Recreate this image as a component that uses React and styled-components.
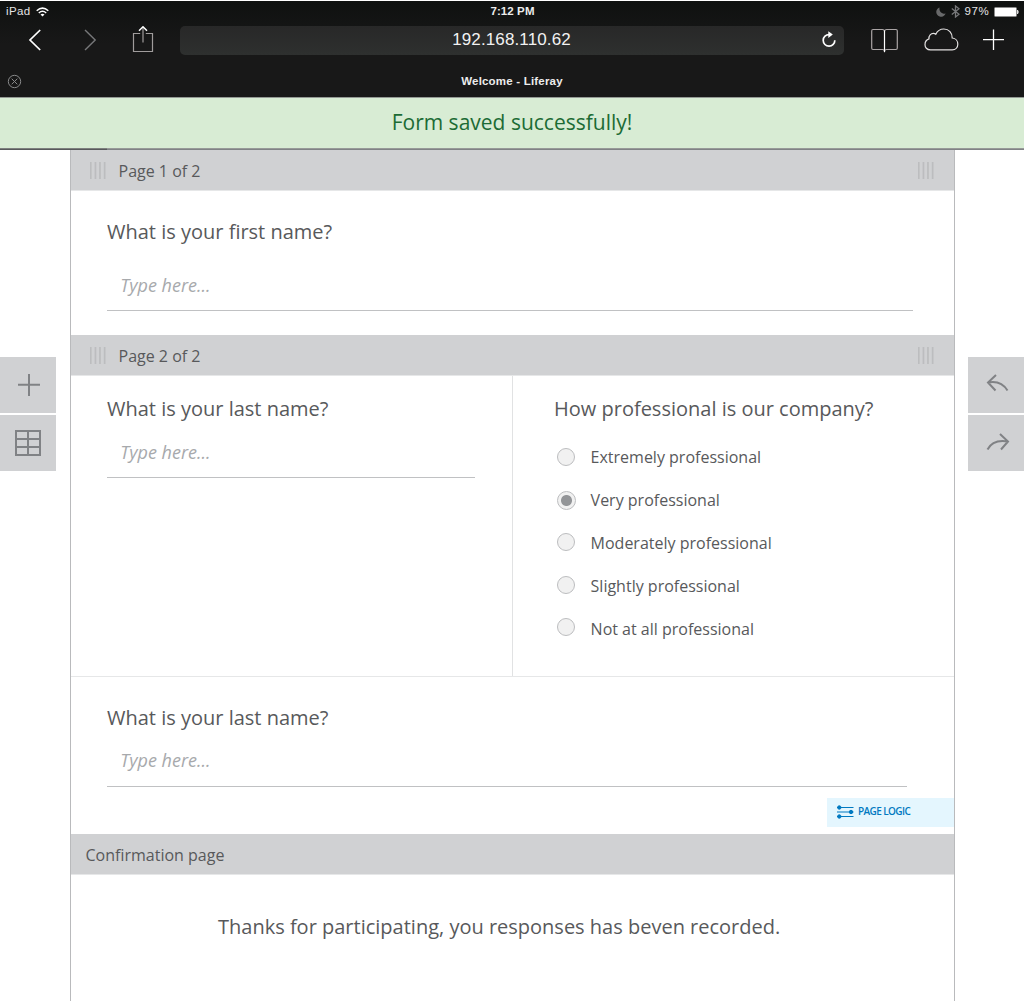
import React from "react";
import styled, { createGlobalStyle } from "styled-components";

const GlobalStyle = createGlobalStyle`
  * { box-sizing: border-box; }
  body { margin: 0; background: #fff; overflow: hidden; }
`;

const Screen = styled.div`
  width: 1024px;
  height: 1001px;
  overflow: hidden;
  display: flex;
  flex-direction: column;
  background: #fff;
  font-family: "Open Sans", "Noto Sans", sans-serif;
  color: #58595b;
`;

/* ---------- Browser chrome ---------- */
const Chrome = styled.header`
  flex: none;
  height: 97px;
  border-top: 1px solid #fff;
  background: linear-gradient(#0f1110, #181818 45%, #181818);
  color: #fff;
  font-family: "Liberation Sans", Arial, sans-serif;
`;

const StatusBar = styled.div`
  height: 21px;
  display: grid;
  grid-template-columns: 1fr auto 1fr;
  align-items: center;
  padding: 0 5px 0 6px;
  font-size: 11.5px;
  line-height: 21px;
`;

const StatusGroup = styled.div`
  display: flex;
  align-items: center;
  justify-content: ${(p) => (p.$end ? "flex-end" : "flex-start")};
  gap: ${(p) => p.$gap}px;
  color: #e4e4e4;
  letter-spacing: ${(p) => p.$spacing || 0}px;
`;

const Clock = styled.span`
  font-weight: 700;
  font-size: 11.5px;
  letter-spacing: 0.1px;
  color: #ececec;
`;

const Toolbar = styled.div`
  height: 36px;
  display: flex;
  align-items: center;
`;

const ToolIcon = styled.svg`
  flex: none;
  display: block;
  margin-left: ${(p) => p.$gap || 0}px;
  fill: none;
  stroke: ${(p) => p.$color || "#fff"};
  stroke-width: ${(p) => p.$weight || 1};
`;

const AddressBar = styled.div`
  width: 664px;
  height: 29px;
  margin-left: 26px;
  border-radius: 5px;
  background: linear-gradient(#282828, #2e302f);
  display: grid;
  grid-template-columns: 1fr auto 1fr;
  align-items: center;
  padding-right: 7px;
  padding-left: 6px;
  font-size: 17px;
  color: #f2f2f2;
`;

const Address = styled.span`
  grid-column: 2;
  letter-spacing: 0.13px;
`;

const Reload = styled.svg`
  justify-self: end;
  display: block;
`;

const TabRow = styled.div`
  height: 39px;
  display: grid;
  grid-template-columns: 1fr auto 1fr;
  align-items: center;
  padding: 8px 7px 0;
`;

const TabTitle = styled.span`
  padding-bottom: 2px;
  font-size: 11.5px;
  font-weight: 700;
  letter-spacing: 0.2px;
  color: #ececec;
`;

/* ---------- Notification ---------- */
const Banner = styled.div`
  flex: none;
  height: 51px;
  border-top: 1px solid #939994;
  background: #d8ecd4;
  color: #1c6b35;
  text-align: center;
  font-size: 21px;
  line-height: 48px;
`;

const LoadTrack = styled.div`
  flex: none;
  height: 2px;
  background: linear-gradient(#979a98 50%, #808285 50%);
`;

const LoadProgress = styled.div`
  width: 107px;
  height: 2px;
  background: linear-gradient(#7d807e 50%, #58595b 50%);
`;

/* ---------- Workspace ---------- */
const Workspace = styled.main`
  flex: 1;
  display: grid;
  grid-template-columns: 70px 885px 69px;
`;

const ToolRail = styled.aside`
  display: flex;
  flex-direction: column;
  align-items: ${(p) => (p.$end ? "flex-end" : "flex-start")};
  gap: 2px;
  padding-top: ${(p) => p.$top}px;
`;

const ToolButton = styled.button`
  width: 56px;
  height: 56px;
  padding: 0;
  border: 0;
  background: #d0d1d3;
  display: block;
`;

const Form = styled.section`
  border: 1px solid #b9babc;
  border-top: 0;
  border-bottom: 0;
`;

const PageHeader = styled.div`
  height: 41px;
  display: flex;
  align-items: center;
  gap: 12.5px;
  padding: 0 20px 0 ${(p) => p.$left}px;
  background: #d0d1d3;
  border-bottom: 1px solid #e6e7e8;
  font-size: 16px;
  line-height: 40px;
`;

const HeaderTitle = styled.span`
  flex: 1;
  padding-top: 2px;
`;

const GripIcon = styled.svg`
  flex: none;
  display: block;
  fill: #bcbdbf;
`;

const Field = styled.div`
  height: ${(p) => p.$height}px;
  padding: ${(p) => p.$top}px 0 0 36px;
`;

const Question = styled.div`
  font-size: 20px;
  line-height: 28px;
  white-space: nowrap;
`;

const Answer = styled.div`
  width: ${(p) => p.$width}px;
  margin-top: ${(p) => p.$gap}px;
  padding: 0 0 ${(p) => p.$bottom || 13}px 13.25px;
  border-bottom: 1px solid #c0c1c3;
  font-size: 18px;
  line-height: 24px;
  font-style: italic;
  color: #a7a9ac;
`;

const SplitRow = styled.div`
  height: 301px;
  display: grid;
  grid-template-columns: 442px 441px;
  border-bottom: 1px solid #e6e7e8;
`;

const Cell = styled.div`
  padding: 19px 0 0 ${(p) => p.$left}px;
  border-left: ${(p) => (p.$divided ? "1px solid #e1e2e3" : "0")};
  margin-left: ${(p) => (p.$divided ? "-1px" : "0")};
`;

const Options = styled.div`
  margin-top: 13px;
  padding-left: 3px;
`;

const Option = styled.label`
  height: 43px;
  display: flex;
  align-items: center;
  gap: ${(p) => (p.$checked ? 14.6 : 15.2)}px;
  padding-left: ${(p) => (p.$checked ? 0 : 0.4)}px;
  font-size: 16px;
  line-height: 43px;
`;

const Radio = styled.span`
  width: ${(p) => (p.$checked ? 19 : 18)}px;
  height: ${(p) => (p.$checked ? 19 : 18)}px;
  margin-top: ${(p) => p.$shift}px;
  border: 1px solid #bcbdbf;
  border-radius: 50%;
  background: ${(p) =>
    p.$checked ? "radial-gradient(circle, #939598 5px, #f1f1f1 6px)" : "#f1f1f1"};
`;

const LastField = styled.div`
  height: 157px;
  padding-top: 27px;
  display: flex;
  flex-direction: column;
`;

const FieldBody = styled.div`
  padding-left: 36px;
  height: 83px;
`;

const PageLogic = styled.div`
  align-self: flex-end;
  width: 127px;
  height: 29px;
  margin-top: 11px;
  padding: 0 0 1px 9px;
  display: flex;
  align-items: center;
  gap: 4px;
  background: #e4f6fe;
  color: #0079c1;
`;

const PageLogicLabel = styled.span`
  padding-bottom: 2px;
  font-size: 10px;
  font-weight: 600;
  letter-spacing: -0.6px;
`;

const Confirmation = styled.div`
  padding: 38px 0 0 147px;
`;

const options = [
  { label: "Extremely professional", shift: -2 },
  { label: "Very professional", shift: -1, checked: true },
  { label: "Moderately professional", shift: -3 },
  { label: "Slightly professional", shift: -3 },
  { label: "Not at all professional", shift: -5 },
];

function Grip() {
  return (
    <GripIcon width="16" height="17" viewBox="0 0 16 17">
      <path d="M0 0H1.6V17H0ZM4.6 0H6.3V17H4.6ZM9.1 0H10.8V17H9.1ZM13.8 0H15.5V17H13.8Z" />
    </GripIcon>
  );
}

function BrowserChrome() {
  return (
    <Chrome>
      <StatusBar>
        <StatusGroup $gap={5.5} $spacing={0.35}>
          iPad
          <svg width="13" height="10" viewBox="0 0 13 10" fill="none" stroke="#fff" strokeWidth="1.5">
            <path d="M.7 3.8Q6.5-1.6 12.3 3.8M2.8 6Q6.5 2.6 10.2 6" />
            <path d="M4.5 7.5Q6.5 5.8 8.5 7.5L6.5 9.6Z" fill="#fff" stroke="none" />
          </svg>
        </StatusGroup>
        <Clock>7:12 PM</Clock>
        <StatusGroup $end $gap={4.7} $spacing={0.6}>
          <svg width="10" height="10" viewBox="0 0 10 10">
            <path d="M3.6.4A4.8 4.8 0 1 0 9.6 6.6A5 5 0 0 1 3.6.4Z" fill="#68696a" />
          </svg>
          <svg width="9" height="13" viewBox="0 0 9 13" fill="none" stroke="#77787a" strokeWidth="1.3">
            <path d="M.8 3.5L8 9.2L4.5 12V1L8 3.8L.8 9.5" />
          </svg>
          97%
          <svg width="25" height="10" viewBox="0 0 25 10">
            <rect x=".5" y=".5" width="22" height="9" rx="1" fill="#fff" stroke="#8b8b8b" />
            <path d="M23.5 3Q25 5 23.5 7Z" fill="#ddd" stroke="#ddd" />
          </svg>
        </StatusGroup>
      </StatusBar>
      <Toolbar>
        <ToolIcon $gap={28} $weight={1.7} width="14" height="24" viewBox="0 0 14 24">
          <path d="M12.2 2L2 12L12.2 22" />
        </ToolIcon>
        <ToolIcon $gap={42} $weight={1.4} $color="#77787a" width="14" height="24" viewBox="0 0 14 24">
          <path d="M1 2L11.2 12L1 22" />
        </ToolIcon>
        <ToolIcon $gap={34} $color="#a09c9c" $weight={1.2} width="22" height="28" viewBox="0 0 22 28">
          <path d="M8.2 7.5H1.5V25.5H20.5V7.5H13.8M11 2V16.5" />
          <path d="M7 4.8L11 .8L15 4.8" stroke="#fff" strokeWidth="1.5" />
        </ToolIcon>
        <AddressBar>
          <Address>192.168.110.62</Address>
          <Reload width="16" height="18" viewBox="0 0 16 18" fill="none" stroke="#fff" strokeWidth="1.7">
            <path d="M8.2 3.6A5.8 5.8 0 1 0 13.8 9.2" />
            <path d="M7.3 .3L11.8 3.6L7.3 6.9Z" fill="#fff" stroke="none" />
          </Reload>
        </AddressBar>
        <ToolIcon $gap={27} $color="#aaa5a5" $weight={1.2} width="27" height="26" viewBox="0 0 27 26">
          <path d="M13.5 4Q13 2.5 11.5 2.5H2Q.7 2.5 .7 4V21Q.7 22.5 2 22.5H11.5Q13 22.5 13.5 24Q14 22.5 15.5 22.5H25Q26.3 22.5 26.3 21V4Q26.3 2.5 25 2.5H15.5Q14 2.5 13.5 4" />
          <path d="M13.5 3.5V25" stroke="#fff" />
        </ToolIcon>
        <ToolIcon $gap={26} $color="#e2e0e0" $weight={1.2} width="35" height="24" viewBox="0 0 35 24">
          <path d="M6.5 21.9C2.8 21.9 1 19.2 1 16.7C1 13.8 2.8 11.6 5 10.9C4.6 7.6 7 5.4 9.4 5.4Q10.8 5.4 11.8 6.2C13.5 2.6 16.4 1 19.8 1C25 1 28.3 5.1 28.2 10C31.8 10.3 33.8 13.2 33.8 16.2C33.8 19.2 31.8 21.9 28.2 21.9Z" />
        </ToolIcon>
        <ToolIcon $gap={23} $weight={1.3} width="23" height="24" viewBox="0 0 23 24">
          <path d="M11.5 1.5V22M1 11.7H22" />
        </ToolIcon>
      </Toolbar>
      <TabRow>
        <svg width="15" height="15" viewBox="0 0 15 15" fill="none" stroke="#88898a">
          <circle cx="7.5" cy="7.5" r="6.2" />
          <path d="M4.7 4.7L10.3 10.3M10.3 4.7L4.7 10.3" />
        </svg>
        <TabTitle>Welcome - Liferay</TabTitle>
      </TabRow>
    </Chrome>
  );
}

function PageBar({ title }) {
  return (
    <PageHeader $left={19}>
      <Grip />
      <HeaderTitle>{title}</HeaderTitle>
      <Grip />
    </PageHeader>
  );
}

export default function App() {
  return (
    <>
      <GlobalStyle />
      <Screen>
        <BrowserChrome />
        <Banner>Form saved successfully!</Banner>
        <LoadTrack>
          <LoadProgress />
        </LoadTrack>
        <Workspace>
          <ToolRail $top={207}>
            <ToolButton aria-label="Add">
              <svg width="56" height="56" fill="none" stroke="#808285" strokeWidth="2">
                <path d="M29 17V39M18 27.7H40" />
              </svg>
            </ToolButton>
            <ToolButton aria-label="Table">
              <svg width="56" height="56" fill="none" stroke="#808285" strokeWidth="2">
                <path d="M16 16H40V40H16ZM28 16V40M16 24H40M16 32H40" />
              </svg>
            </ToolButton>
          </ToolRail>
          <Form>
            <PageBar title="Page 1 of 2" />
            <Field $height={144} $top={27}>
              <Question>What is your first name?</Question>
              <Answer $width={806} $gap={27}>Type here...</Answer>
            </Field>
            <PageBar title="Page 2 of 2" />
            <SplitRow>
              <Cell $left={36}>
                <Question>What is your last name?</Question>
                <Answer $width={368} $gap={17}>Type here...</Answer>
              </Cell>
              <Cell $left={41} $divided>
                <Question>How professional is our company?</Question>
                <Options>
                  {options.map((o) => (
                    <Option key={o.label} $checked={o.checked}>
                      <Radio $checked={o.checked} $shift={o.shift} />
                      {o.label}
                    </Option>
                  ))}
                </Options>
              </Cell>
            </SplitRow>
            <LastField>
              <FieldBody>
                <Question>What is your last name?</Question>
                <Answer $width={800} $gap={16} $bottom={14}>Type here...</Answer>
              </FieldBody>
              <PageLogic>
                <svg width="18" height="14" viewBox="0 0 18 14" fill="#0079c1" stroke="#0079c1">
                  <path d="M1 2.5H17.5M1 7H17.5M1 11.5H17.5" />
                  <circle cx="3.3" cy="2.5" r="1.7" />
                  <circle cx="15" cy="7" r="1.7" />
                  <circle cx="3.3" cy="11.5" r="1.7" />
                </svg>
                <PageLogicLabel>PAGE LOGIC</PageLogicLabel>
              </PageLogic>
            </LastField>
            <PageHeader $left={14.5}>
              <HeaderTitle>Confirmation page</HeaderTitle>
            </PageHeader>
            <Confirmation>
              <Question>Thanks for participating, you responses has beven recorded.</Question>
            </Confirmation>
          </Form>
          <ToolRail $end $top={207}>
            <ToolButton aria-label="Undo">
              <svg width="56" height="56" fill="none" stroke="#808285" strokeWidth="2">
                <path d="M28 18L20 25.5L27.5 33.5M20 25.5Q33 23 39.5 33.5" />
              </svg>
            </ToolButton>
            <ToolButton aria-label="Redo">
              <svg width="56" height="56" fill="none" stroke="#808285" strokeWidth="2">
                <path d="M32 19L40 26.5L33 34.5M40 26.5Q25 24 19.5 34.5" />
              </svg>
            </ToolButton>
          </ToolRail>
        </Workspace>
      </Screen>
    </>
  );
}
